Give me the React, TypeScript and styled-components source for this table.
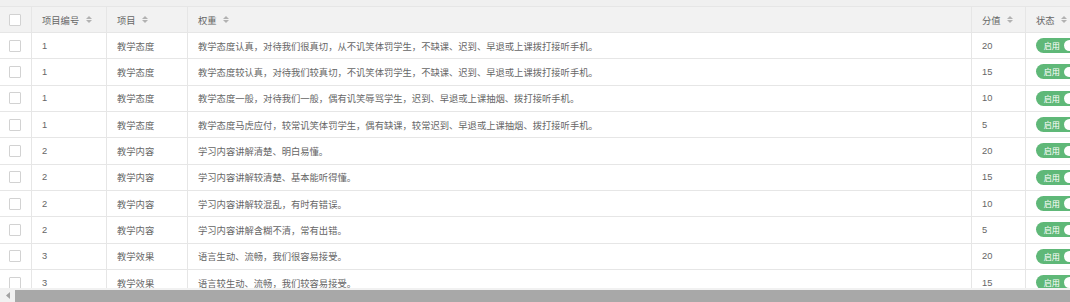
import React from "react";
import styled, { createGlobalStyle } from "styled-components";

const Global = createGlobalStyle`
  html, body { margin: 0; padding: 0; background: #fff; }
  body { font-family: "Liberation Sans", "Noto Sans CJK SC", sans-serif; }
  * { box-sizing: border-box; }
`;

const Page = styled.div`
  width: 1070px;
  height: 302px;
  overflow: hidden;
  background: #f0f0f0;
  padding-top: 6px;
  display: flex;
  flex-direction: column;
`;

const TableBox = styled.div`
  flex: 1;
  display: flex;
  flex-direction: column;
  background: #fff;
  overflow: hidden;
`;

const Row = styled.div<{ $head?: boolean }>`
  display: grid;
  grid-template-columns: 32px 75px 81px 784px 54px 90px;
  width: 1116px;
  flex: none;
  height: ${(p) => (p.$head ? "27px" : "26.333px")};
  background: ${(p) => (p.$head ? "#f2f2f2" : "#fff")};
  border-top: ${(p) => (p.$head ? "1px solid #e6e6e6" : "none")};
  border-bottom: 1px solid #e6e6e6;
`;

const Cell = styled.div<{ $center?: boolean }>`
  display: flex;
  align-items: center;
  justify-content: ${(p) => (p.$center ? "center" : "flex-start")};
  padding: ${(p) => (p.$center ? "0" : "0 10px")};
  border-right: 1px solid #e6e6e6;
  font-size: 9.3px;
  color: #666;
  white-space: nowrap;
  overflow: hidden;
`;

const Body = styled.div`
  height: 255px;
  flex: none;
  overflow: hidden;
  display: flex;
  flex-direction: column;
`;

const Checkbox = styled.span`
  display: block;
  width: 12px;
  height: 12px;
  margin-left: -1px;
  border: 1px solid #d2d2d2;
  border-radius: 1px;
  background: #fff;
`;

const HeadLabel = styled.span`
  display: inline-flex;
  align-items: center;
  gap: 6.5px;
`;

const SortIcon = styled.svg`
  display: block;
  flex: none;
`;

const Switch = styled.span`
  display: inline-flex;
  align-items: center;
  flex: none;
  height: 15px;
  width: 42.5px;
  padding-left: 7.4px;
  border-radius: 14px;
  background: #5fb878;
`;

const SwitchText = styled.em`
  font-style: normal;
  font-size: 8.1px;
  color: #fff;
  width: 16.9px;
  text-align: center;
  line-height: 15px;
  font-family: "Noto Sans CJK SC", sans-serif;
`;

const Knob = styled.i`
  display: block;
  width: 10.8px;
  height: 10.8px;
  margin-left: 4px;
  border-radius: 50%;
  background: #fff;
`;

const ScrollBar = styled.div`
  height: 14px;
  flex: none;
  background: #f1f1f1;
  display: flex;
  align-items: stretch;
  padding-top: 1.5px;
`;

const ScrollButton = styled.div`
  width: 15px;
  flex: none;
  display: flex;
  align-items: center;
  justify-content: center;
  margin-top: -1.5px;
`;

const Thumb = styled.div`
  flex: 1;
  background: #a8a8a8;
`;

const Sort = () => (
  <SortIcon width="6" height="7" viewBox="0 0 6 7">
    <polygon points="0,3 3,0 6,3" fill="#b2b2b2" />
    <polygon points="0,4 3,7 6,4" fill="#b2b2b2" />
  </SortIcon>
);

const rows: [string, string, string, string][] = [
  ["1", "教学态度", "教学态度认真，对待我们很真切，从不讥笑体罚学生，不缺课、迟到、早退或上课拨打接听手机。", "20"],
  ["1", "教学态度", "教学态度较认真，对待我们较真切，不讥笑体罚学生，不缺课、迟到、早退或上课拨打接听手机。", "15"],
  ["1", "教学态度", "教学态度一般，对待我们一般，偶有讥笑辱骂学生，迟到、早退或上课抽烟、拨打接听手机。", "10"],
  ["1", "教学态度", "教学态度马虎应付，较常讥笑体罚学生，偶有缺课，较常迟到、早退或上课抽烟、拨打接听手机。", "5"],
  ["2", "教学内容", "学习内容讲解清楚、明白易懂。", "20"],
  ["2", "教学内容", "学习内容讲解较清楚、基本能听得懂。", "15"],
  ["2", "教学内容", "学习内容讲解较混乱，有时有错误。", "10"],
  ["2", "教学内容", "学习内容讲解含糊不清，常有出错。", "5"],
  ["3", "教学效果", "语言生动、流畅，我们很容易接受。", "20"],
  ["3", "教学效果", "语言较生动、流畅，我们较容易接受。", "15"],
];

const headers = ["项目编号", "项目", "权重", "分值", "状态"];

export default function App() {
  return (
    <>
      <Global />
      <Page>
        <TableBox>
          <Row $head>
            <Cell $center>
              <Checkbox />
            </Cell>
            {headers.map((h) => (
              <Cell key={h}>
                <HeadLabel>
                  {h}
                  <Sort />
                </HeadLabel>
              </Cell>
            ))}
          </Row>
          <Body>
            {rows.map((r, i) => (
              <Row key={i}>
                <Cell $center>
                  <Checkbox />
                </Cell>
                <Cell>{r[0]}</Cell>
                <Cell>{r[1]}</Cell>
                <Cell>{r[2]}</Cell>
                <Cell>{r[3]}</Cell>
                <Cell>
                  <Switch>
                    <SwitchText>启用</SwitchText>
                    <Knob />
                  </Switch>
                </Cell>
              </Row>
            ))}
          </Body>
          <ScrollBar>
            <ScrollButton>
              <svg width="4" height="7" viewBox="0 0 4 7">
                <polygon points="4,0 0,3.5 4,7" fill="#a3a3a3" />
              </svg>
            </ScrollButton>
            <Thumb />
          </ScrollBar>
        </TableBox>
      </Page>
    </>
  );
}
